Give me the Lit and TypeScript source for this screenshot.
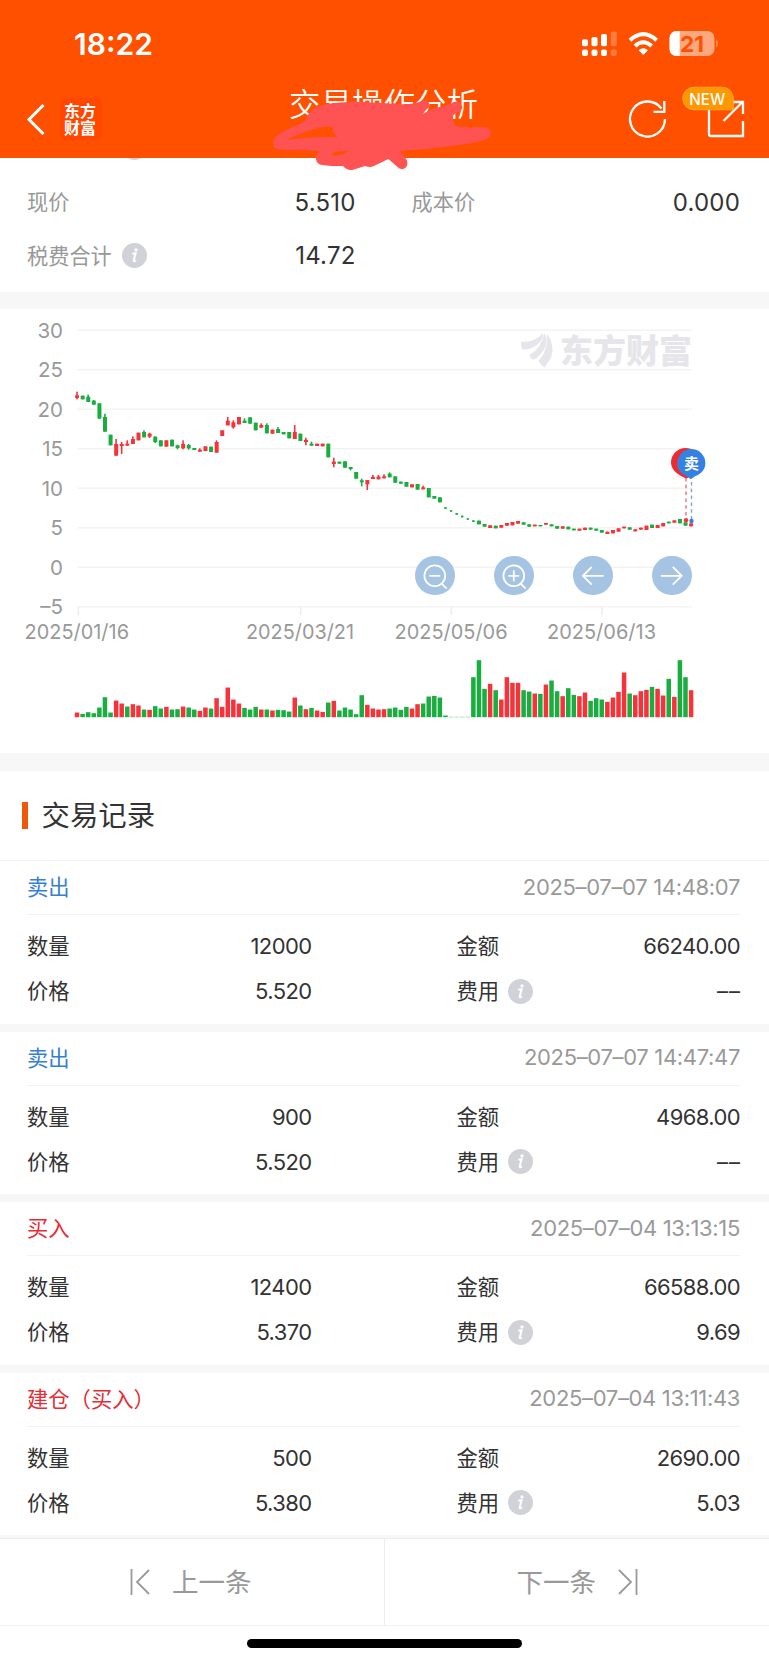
import { LitElement, html, svg, css } from "lit";
import { customElement, property } from "lit/decorators.js";

const RED = "#f5333a";
const GREEN = "#1aad40";

// Volume bars: colour code + height in thirds of a pixel.
const VOLUME = (
  "r14 g10 g15 g12 g29 g60 g14 r50 r41 g32 r39 r35 g23 r22 g33 g26 r31 g23 g24 r32 g29 g23 r19 r29 g26 r57 r31 r89 r53 r41 " +
  "g28 g23 g31 r23 g23 r20 g22 g21 g17 r59 g35 r24 g28 r20 r16 g44 r49 g20 g29 g23 g9 g66 r37 r26 r23 r24 g26 g29 g22 g31 " +
  "r26 r39 g41 g62 g64 g59 g5 g1 g1 g1 g1 g120 g171 g85 r100 g81 r53 r120 r103 r103 g81 g77 r71 g70 r98 g110 g78 r63 g87 " +
  "g67 r63 r74 g49 g57 g53 r46 r59 r76 r134 g71 r66 r78 r82 g91 r85 r65 g115 r61 g171 g120 r81"
).split(" ");

// Candles: colour, body top, body bottom, optional wick top and bottom (thirds of a pixel).
const CANDLES = (
  "r256,264,245,268 g257,268 g260,276,254 g272,284,270 g280,326 g321,365,311 g374,406 r402,437,387 r402,408,396,432 " +
  "r401,407,391 r387,402,379 r368,391 g366,382,361 r371,380,368,384 g380,396,379,399 g391,409 r391,410 g389,409 " +
  "g406,414,404,418 r402,415,391,418 g405,415,402,419 g414,420 r419,425,415 r409,423 g410,426 r396,428,391 r361,378 " +
  "r332,346,321 r337,352,331,356 r321,343 g332,339,325 g322,341 g338,361 r345,353,340 g345,370,340 r359,371 g357,369,351 " +
  "g366,373 g366,385 r366,387,345 g371,393 r390,396,383,406 g401,407,395 r401,408 r401,409 g401,442 r455,462,443,472 " +
  "g455,461 g454,473 g471,477,471,481 g486,506 g511,517,506,529 r510,523,510,540 r501,507,495 r500,508,495 r499,505,493 " +
  "g491,502,487 g499,518 g515,521 g516,530 r523,532 g522,539 r532,538,527 g534,562 g558,566 g562,577 g592,597 g601,605 " +
  "g609,614 g617,622 g625,629 g631,636 g632,643 g642,650 r646,654 g647,655 r645,653 r639,647 r636,646 r633,641 g637,644 " +
  "g643,650 r644,649 g645,649 r639,644 g643,649 g648,656 r649,656 g650,658 g656,661 r656,662 r653,660 g653,659 g656,662 " +
  "g660,668 r665,672 r660,670 r655,665 r650,655 g652,659 r658,664 r653,659 r647,660 g644,654 r645,654 r639,649 g635,640 " +
  "r631,638 g627,640 g637,647 r640,649"
).split(" ");

const PITCH = 5.582;
const tint = (s: string) => (s[0] === "r" ? RED : GREEN);

@customElement("info-dot")
class InfoDot extends LitElement {
  static styles = css`
    :host { display: block; width: 25px; height: 25px; flex: none; }
    svg { display: block; }
  `;
  render() {
    return html`<svg width="25" height="25" viewBox="0 0 25 25">
      <circle cx="12.5" cy="12.5" r="12.5" fill="#d1d1d8" />
      <circle cx="14" cy="6.9" r="1.7" fill="#fff" />
      <path d="M10.300 10.800L13.600 10.200L11.700 17.400Q11.500 19 14 17.500" fill="none" stroke="#fff" stroke-width="2" />
    </svg>`;
  }
}

@customElement("price-chart")
class PriceChart extends LitElement {
  static styles = css`
    :host { display: block; position: relative; height: 444px; background: #fff; }
    .plot { display: block; }
    text { font-family: Inter, "Noto Sans CJK SC", sans-serif; }
    .axis { font-size: 20.5px; fill: #999; }
    .brand { font-family: "Noto Sans CJK SC", sans-serif; font-weight: 900; font-size: 33px; fill: #e6e6ea; }
    .pin { font-family: "Noto Sans CJK SC", sans-serif; font-weight: 700; font-size: 15px; fill: #fff; }
    .tools { position: absolute; left: 415px; top: 246.5px; display: flex; gap: 39.4px; }
    .tool { width: 39.6px; height: 39.6px; border-radius: 50%; background: #a5c3e3; display: block; }
    .tool svg { display: block; width: 100%; height: 100%; fill: none; stroke: #fff; stroke-width: 1.8; }
  `;

  private grid() {
    return [30, 25, 20, 15, 10, 5, 0, -5].map((v, i) => {
      const y = 330.3 + i * 39.5;
      return svg`<path d="M77.5 ${y}H692" stroke="#f3f3f4" stroke-width="1.4" />
        <text class="axis" x="63" y=${y + 7.6} text-anchor="end">${v < 0 ? "–" + -v : v}</text>`;
    });
  }

  private dates() {
    const items: [string, number, number, number][] = [
      ["2025/01/16", 24.5, 104.5, 78.3],
      ["2025/03/21", 246, 108, 300.7],
      ["2025/05/06", 394.5, 113, 451.2],
      ["2025/06/13", 547, 109, 602],
    ];
    return items.map(
      ([t, x, w, tick]) => svg`<path d="M${tick} 607V615" stroke="#ececee" stroke-width="1.4" />
        <text class="axis" x=${x} y="638.8" textLength=${w} lengthAdjust="spacingAndGlyphs">${t}</text>`
    );
  }

  private candles() {
    return CANDLES.map((c, i) => {
      const n = c.slice(1).split(",").map((v) => 310 + Number(v) / 3);
      const x = 77.1 + i * PITCH;
      const thin = i >= 66 && i <= 71;
      const w = thin ? 2.4 : 4;
      const top = n[2] ?? n[0];
      const bottom = n[3] ?? n[1];
      return svg`<rect x=${x - w / 2} y=${n[0]} width=${w} height=${n[1] - n[0]} fill=${tint(c)} />
        <rect x=${x - 0.9} y=${top} width="1.6" height=${bottom - top} fill=${tint(c)} />`;
    });
  }

  private volume() {
    return VOLUME.map((c, i) => {
      const h = Number(c.slice(1)) / 3;
      return svg`<rect x=${74.8 + i * PITCH} y=${717.2 - h} width="4.5" height=${h} fill=${tint(c)} />`;
    });
  }

  render() {
    return html`
      <svg class="plot" width="769" height="444" viewBox="0 309 769 444">
        ${this.grid()}
        <g fill="#e6e6ea">
          <path d="M521 341.500Q534 343 543 333Q544 339 538 344Q531 350 522 349.500Q521 345 521 341.500Z" />
          <path d="M529.500 355Q541 349 544.500 333Q549.500 342 543 351Q538 358 533 359.500Q530 358 529.500 355Z" />
          <path d="M538.500 361Q549 349 547 333.500Q555.500 345 551 358L544.500 367.500Q541 365 538.500 361Z" />
        </g>
        <text class="brand" x="560" y="362.500" textLength="132" lengthAdjust="spacingAndGlyphs">东方财富</text>
        ${this.dates()} ${this.candles()}
        <path d="M686 478V517" stroke="#f26d78" stroke-width="1.400" stroke-dasharray="3.500 3.300" />
        <path d="M691.500 482V519" stroke="#7ea6da" stroke-width="1.400" stroke-dasharray="3.500 3.300" />
        <path d="M671 462.500A14.600 14.600 0 0 1 700.200 462.500C700.200 470 694 475 686.500 478.500C680 476 671 471 671 462.500Z" fill="#ee2a2f" />
        <path d="M677.200 463.200A14.100 14.100 0 0 1 705.400 463.200C705.400 470 700 474.500 695 476.300L690.800 479.300L687 476.300C682 474.500 677.200 470 677.200 463.200Z" fill="#3480e3" />
        <text class="pin" x="691.500" y="468.800" text-anchor="middle">卖</text>
        <circle cx="686" cy="520.300" r="2.200" fill="#f5333a" />
        <circle cx="691.500" cy="521" r="2.200" fill="#3480e3" />
        ${this.volume()}
      </svg>
      <div class="tools">
        <span class="tool"><svg viewBox="0 0 40 40"><circle cx="20" cy="20" r="10.500" /><path d="M14.500 20H25.500M27.200 28.200L32 33" /></svg></span>
        <span class="tool"><svg viewBox="0 0 40 40"><circle cx="20" cy="20" r="10.500" /><path d="M14.500 20H25.500M20 14.500V25.500M27.200 28.200L32 33" /></svg></span>
        <span class="tool"><svg viewBox="0 0 40 40"><path d="M31 20H10M19 11L10 20L19 29" /></svg></span>
        <span class="tool"><svg viewBox="0 0 40 40"><path d="M9 20H30M21 11L30 20L21 29" /></svg></span>
      </div>
    `;
  }
}

interface Trade {
  kind: string;
  side: "sell" | "buy";
  time: string;
  qty: string;
  amount: string;
  price: string;
  fee: string;
}

@customElement("trade-record")
class TradeRecord extends LitElement {
  static styles = css`
    :host { display: block; box-sizing: border-box; height: 162.6px; padding: 0 29px 0 27px; background: #fff; color: #333; }
    .head { display: flex; align-items: center; justify-content: space-between; height: 54px; padding-bottom: 2px; border-bottom: 1px solid #f3f3f4; box-sizing: border-box; font-size: 21.3px; }
    .sell { color: #3580d2; }
    .buy { color: #e62c35; }
    .kind { margin-top: -2px; }
    .time { color: #999; font-size: 22px; letter-spacing: -0.34px; }
    .grid { display: grid; grid-template-columns: 100px 184.5px 245px 1fr; grid-auto-rows: 45px; padding-top: 8.5px; align-items: center; font-size: 21.3px; }
    .num { font-size: 22px; text-align: right; letter-spacing: -0.6px; }
    .num.dashes { letter-spacing: 1px; margin-right: -1px; }
    .lbl { display: flex; align-items: center; gap: 9px; white-space: nowrap; }
    .lbl span { margin-top: -3px; }
    .lbl.right { margin-left: 145px; }
  `;
  @property({ attribute: false }) trade!: Trade;

  render() {
    const t = this.trade;
    return html`
      <div class="head"><span class="kind ${t.side}">${t.kind}</span><span class="time">${t.time}</span></div>
      <div class="grid">
        <span class="lbl"><span>数量</span></span><span class="num">${t.qty}</span>
        <span class="lbl right"><span>金额</span></span><span class="num">${t.amount}</span>
        <span class="lbl"><span>价格</span></span><span class="num">${t.price}</span>
        <span class="lbl right"><span>费用</span><info-dot></info-dot></span><span class=${t.fee === "––" ? "num dashes" : "num"}>${t.fee}</span>
      </div>
    `;
  }
}

const TRADES: Trade[] = [
  { kind: "卖出", side: "sell", time: "2025–07–07 14:48:07", qty: "12000", amount: "66240.00", price: "5.520", fee: "––" },
  { kind: "卖出", side: "sell", time: "2025–07–07 14:47:47", qty: "900", amount: "4968.00", price: "5.520", fee: "––" },
  { kind: "买入", side: "buy", time: "2025–07–04 13:13:15", qty: "12400", amount: "66588.00", price: "5.370", fee: "9.69" },
  { kind: "建仓（买入）", side: "buy", time: "2025–07–04 13:11:43", qty: "500", amount: "2690.00", price: "5.380", fee: "5.03" },
];

@customElement("app-root")
class AppRoot extends LitElement {
  static styles = css`
    :host { display: block; width: 769px; height: 1663px; overflow: hidden; background: #f7f7f8; font-family: Inter, "Noto Sans CJK SC", sans-serif; color: #333; }
    * { box-sizing: border-box; }
    .header { position: relative; z-index: 1; height: 158px; background: #ff5000; color: #fff; }
    .status { display: flex; align-items: center; justify-content: space-between; height: 88px; padding: 0 49px 0 74px; }
    .clock { font-size: 30px; font-weight: 600; }
    .signals { display: block; }
    .signals text { font-family: Inter, sans-serif; font-weight: 700; font-size: 22px; fill: #ff5000; }
    .nav { display: flex; align-items: center; height: 62px; padding: 0 19px 0 26px; }
    .back { flex: none; }
    .logo { margin-left: 14px; width: 42px; height: 42px; padding-right: 2px; border-radius: 6px; background: #ff4700; display: grid; place-content: center; font: 700 16px/17.5px "Noto Sans CJK SC", sans-serif; }
    .title { flex: 1; margin: -35px 0 0 187px; font-family: "Noto Sans CJK SC", sans-serif; font-size: 31.5px; font-weight: 350; white-space: nowrap; line-height: 40px; }
    .actions { flex: none; margin-top: -8px; }
    .actions text { font-family: Inter, sans-serif; font-size: 16px; font-weight: 500; fill: #fff; }
    .scribble { position: absolute; left: 265px; top: 80px; }
    .summary { display: flow-root; background: #fff; height: 134px; }
    .facts { display: grid; grid-template-columns: 200px 128.5px 1fr 200px; grid-template-rows: repeat(3, 53.5px); align-items: center; margin-top: -36px; padding: 0 29px 0 27px; height: 170px; }
    .key { display: flex; align-items: center; gap: 10px; font-size: 21.2px; color: #999; white-space: nowrap; }
    .key span { margin-top: -3px; }
    .key.second { padding-left: 56px; }
    .hidden-key { padding-left: 94.5px; grid-column: 1 / -1; margin-top: -2px; }
    .val { font-size: 24px; text-align: right; letter-spacing: 0.2px; }
    .chart { margin-top: 17px; }
    .caption { margin-top: 18px; height: 90px; border-bottom: 1px solid #f0f0f1; background: #fff; display: flex; align-items: center; gap: 14px; padding: 0 0 1px 22px; font-size: 28.4px; }
    .caption span { margin-top: -3px; }
    .mark { width: 5.5px; height: 27px; background: #ee5808; }
    .records { display: flex; flex-direction: column; gap: 8px; }
    .pager { margin-top: 3px; display: grid; grid-template-columns: 385px 1fr; height: 88px; border-top: 1px solid #ededee; border-bottom: 1px solid #f0f0f1; background: #fff; color: #999; font-size: 26.5px; }
    .step { display: flex; align-items: center; gap: 21px; padding-bottom: 1px; }
    .step span { margin-top: -3px; }
    .prev { padding-left: 130px; border-right: 1px solid #ededee; }
    .next { padding-left: 131.5px; }
    .step svg { fill: none; stroke: #999; stroke-width: 1.8; }
    .home { display: flex; justify-content: center; padding-top: 12.5px; height: 40px; background: #fff; }
    .bar { width: 275px; height: 9.5px; border-radius: 5px; background: #000; }
  `;

  render() {
    return html`
      <header class="header">
        <div class="status">
          <span class="clock">18:22</span>
          <svg class="signals" width="140" height="28" viewBox="580 30 140 28" fill="#fff">
            <g>
              <rect x="582" y="39.300" width="6" height="7" rx="1.800" /><rect x="582" y="49.500" width="6" height="6.500" rx="2" />
              <rect x="591.500" y="37" width="6" height="9.300" rx="1.800" /><rect x="591.500" y="49.500" width="6" height="6.500" rx="2" />
              <rect x="601" y="34" width="6" height="12.300" rx="1.800" /><rect x="601" y="49.500" width="6" height="6.500" rx="2" />
              <g opacity=".25"><rect x="610.800" y="31.500" width="6" height="14.800" rx="1.800" /><rect x="610.800" y="49.500" width="6" height="6.500" rx="2" /></g>
            </g>
            <g fill="none" stroke="#fff" stroke-width="4">
              <path d="M630 40.300Q643.300 28 656.600 40.300" />
              <path d="M635 46Q643.300 38.500 651.600 46" />
            </g>
            <path d="M638.600 50.200Q643.300 46.300 648 50.200L643.300 55Z" />
            <rect x="669.500" y="31" width="45" height="25" rx="7" opacity=".5" />
            <path d="M679.700 31H676.500A7 7 0 0 0 669.500 38V49A7 7 0 0 0 676.500 56H679.700Z" />
            <path d="M716.300 39.500Q719 43.500 716.300 47.500Z" opacity=".5" />
            <text x="680" y="51.700" textLength="24" lengthAdjust="spacingAndGlyphs">21</text>
          </svg>
        </div>
        <div class="nav">
          <svg class="back" width="20" height="32" viewBox="0 0 20 32" fill="none" stroke="#fff" stroke-width="3"><path d="M17.500 2L3 16.500L17.500 31" /></svg>
          <span class="logo"><span>东方<br />财富</span></span>
          <span class="title">交易操作分析</span>
          <svg class="actions" width="130" height="60" viewBox="620 85 130 60" fill="none" stroke="#fff" stroke-width="2.300">
            <path d="M665 119A17.500 17.500 0 1 1 661.500 108.500M664.300 101V111.800H653.500" />
            <path d="M709 110V134Q709 136 711 136H743V121M723.500 121L742.500 102M731 102H743V114" />
            <path d="M694 87.200H722A11 11 0 0 1 733.300 98V109.800H694A11.200 11.200 0 0 1 694 87.200Z" fill="#ff9800" stroke="#ffb03a" stroke-width=".8" />
            <text x="689.200" y="104.500" stroke="none" textLength="36" lengthAdjust="spacingAndGlyphs">NEW</text>
          </svg>
        </div>
        <svg class="scribble" width="240" height="95" viewBox="0 0 720 285">
          <path fill="#ff5353" fill-rule="evenodd" d="M25 192C22 176 38 164 60 152L120 124C130 102 136 88 162 79C210 62 300 65 360 70C420 75 450 74 468 63C485 56 498 68 492 82L462 108L500 88C530 78 552 76 562 68C578 60 592 70 592 84C590 94 560 104 560 112L570 138C600 143 630 141 660 142C672 144 678 152 676 166C672 180 640 186 600 192C540 202 480 208 405 213L424 238C434 256 420 274 402 265L370 237L325 259C316 263 308 260 300 258L262 270C250 272 240 264 234 258C210 258 190 258 170 255C150 250 148 232 162 212C120 210 60 212 35 207C27 203 25 198 25 192ZM62 180C90 166 150 142 180 140C200 139 212 143 202 151C204 160 216 166 217 171C160 170 110 174 62 180ZM202 220C215 212 235 214 254 213C240 220 222 228 204 227Z" />
        </svg>
      </header>

      <section class="summary">
        <div class="facts">
          <span class="key hidden-key"><info-dot></info-dot></span>
          <span class="key"><span>现价</span></span><span class="val">5.510</span>
          <span class="key second"><span>成本价</span></span><span class="val">0.000</span>
          <span class="key"><span>税费合计</span><info-dot></info-dot></span><span class="val">14.72</span>
        </div>
      </section>

      <price-chart class="chart"></price-chart>

      <section>
        <div class="caption"><i class="mark"></i><span>交易记录</span></div>
        <div class="records">${TRADES.map((t) => html`<trade-record .trade=${t}></trade-record>`)}</div>
      </section>

      <nav class="pager">
        <span class="step prev"><svg width="21" height="26" viewBox="0 0 21 26"><path d="M1.500 0V26M19 1L7 13L19 25" /></svg><span>上一条</span></span>
        <span class="step next"><span>下一条</span><svg width="21" height="26" viewBox="0 0 21 26"><path d="M19.500 0V26M2 1L14 13L2 25" /></svg></span>
      </nav>
      <div class="home"><span class="bar"></span></div>
    `;
  }
}
